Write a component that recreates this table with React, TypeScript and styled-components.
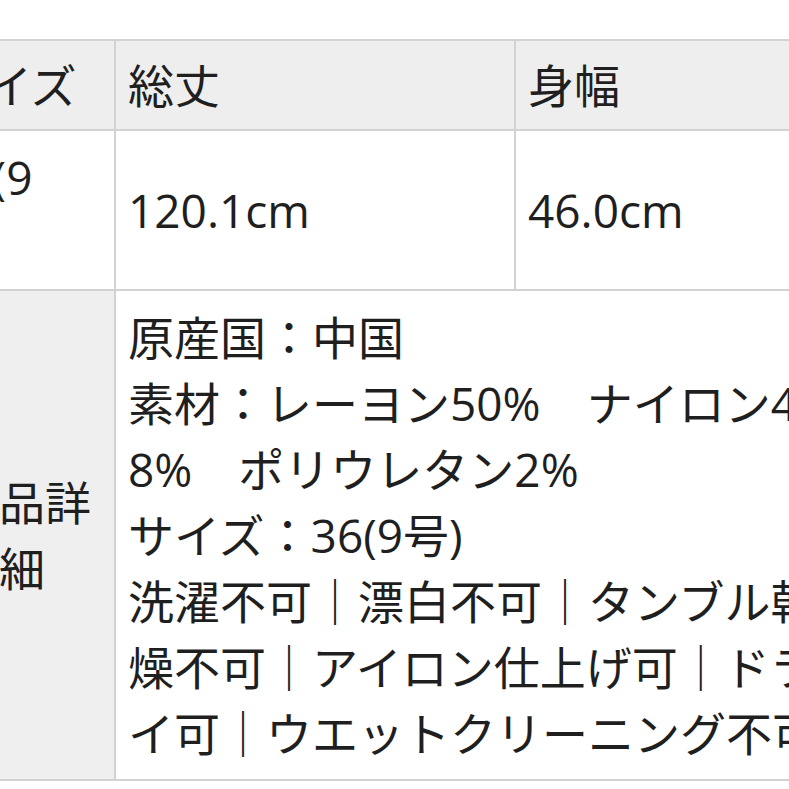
import React from "react";
import styled, { createGlobalStyle } from "styled-components";

const GlobalStyle = createGlobalStyle`
  html, body {
    margin: 0;
    padding: 0;
    background: #ffffff;
  }
  body {
    overflow: hidden;
    font-family: "Open Sans", "Noto Sans CJK JP", sans-serif;
    color: #1f1f1f;
  }
`;

const Viewport = styled.div`
  width: 789px;
  height: 789px;
  overflow: hidden;
`;

const Sheet = styled.div`
  display: grid;
  grid-template-columns: 188px 400px 400px;
  width: max-content;
  margin: 39px 0 0 -74px;
  border-top: 2px solid #d2d2d2;
  border-left: 2px solid #d2d2d2;
  font-size: 46px;
  line-height: 66px;
  font-weight: 400;
`;

const Cell = styled.div<{ $lead?: boolean }>`
  box-sizing: border-box;
  display: flex;
  flex-direction: column;
  justify-content: center;
  border-right: 2px solid #d2d2d2;
  border-bottom: 2px solid #d2d2d2;
  padding: 13px ${(p) => (p.$lead ? "10px" : "12px")} 13px 12px;
  white-space: nowrap;
`;

const HeadCell = styled(Cell)`
  background: #eeeeee;
  padding-top: 11px;
  padding-bottom: 11px;
`;

const ValueCell = styled(Cell)`
  background: #ffffff;
`;

const LabelCell = styled(Cell)`
  background: #efefef;
  text-align: center;
`;

const DetailCell = styled(Cell)`
  grid-column: span 2;
  background: #ffffff;
`;

const TextLine = styled.span`
  display: block;
`;

const headers = ["サイズ", "総丈", "身幅"];
const sizeLines = ["36(9", "号)"];
const values = ["120.1cm", "46.0cm"];
const labelLines = ["商品詳", "細"];
const detailLines = [
  "原産国：中国",
  "素材：レーヨン50%　ナイロン4",
  "8%　ポリウレタン2%",
  "サイズ：36(9号)",
  "洗濯不可｜漂白不可｜タンブル乾",
  "燥不可｜アイロン仕上げ可｜ドラ",
  "イ可｜ウエットクリーニング不可",
];

export default function App() {
  return (
    <>
      <GlobalStyle />
      <Viewport>
        <Sheet>
          {headers.map((h, i) => (
            <HeadCell key={h} $lead={i === 0}>
              {h}
            </HeadCell>
          ))}
          <ValueCell $lead>
            {sizeLines.map((l) => (
              <TextLine key={l}>{l}</TextLine>
            ))}
          </ValueCell>
          {values.map((v) => (
            <ValueCell key={v}>{v}</ValueCell>
          ))}
          <LabelCell $lead>
            {labelLines.map((l) => (
              <TextLine key={l}>{l}</TextLine>
            ))}
          </LabelCell>
          <DetailCell>
            {detailLines.map((l) => (
              <TextLine key={l}>{l}</TextLine>
            ))}
          </DetailCell>
        </Sheet>
      </Viewport>
    </>
  );
}
